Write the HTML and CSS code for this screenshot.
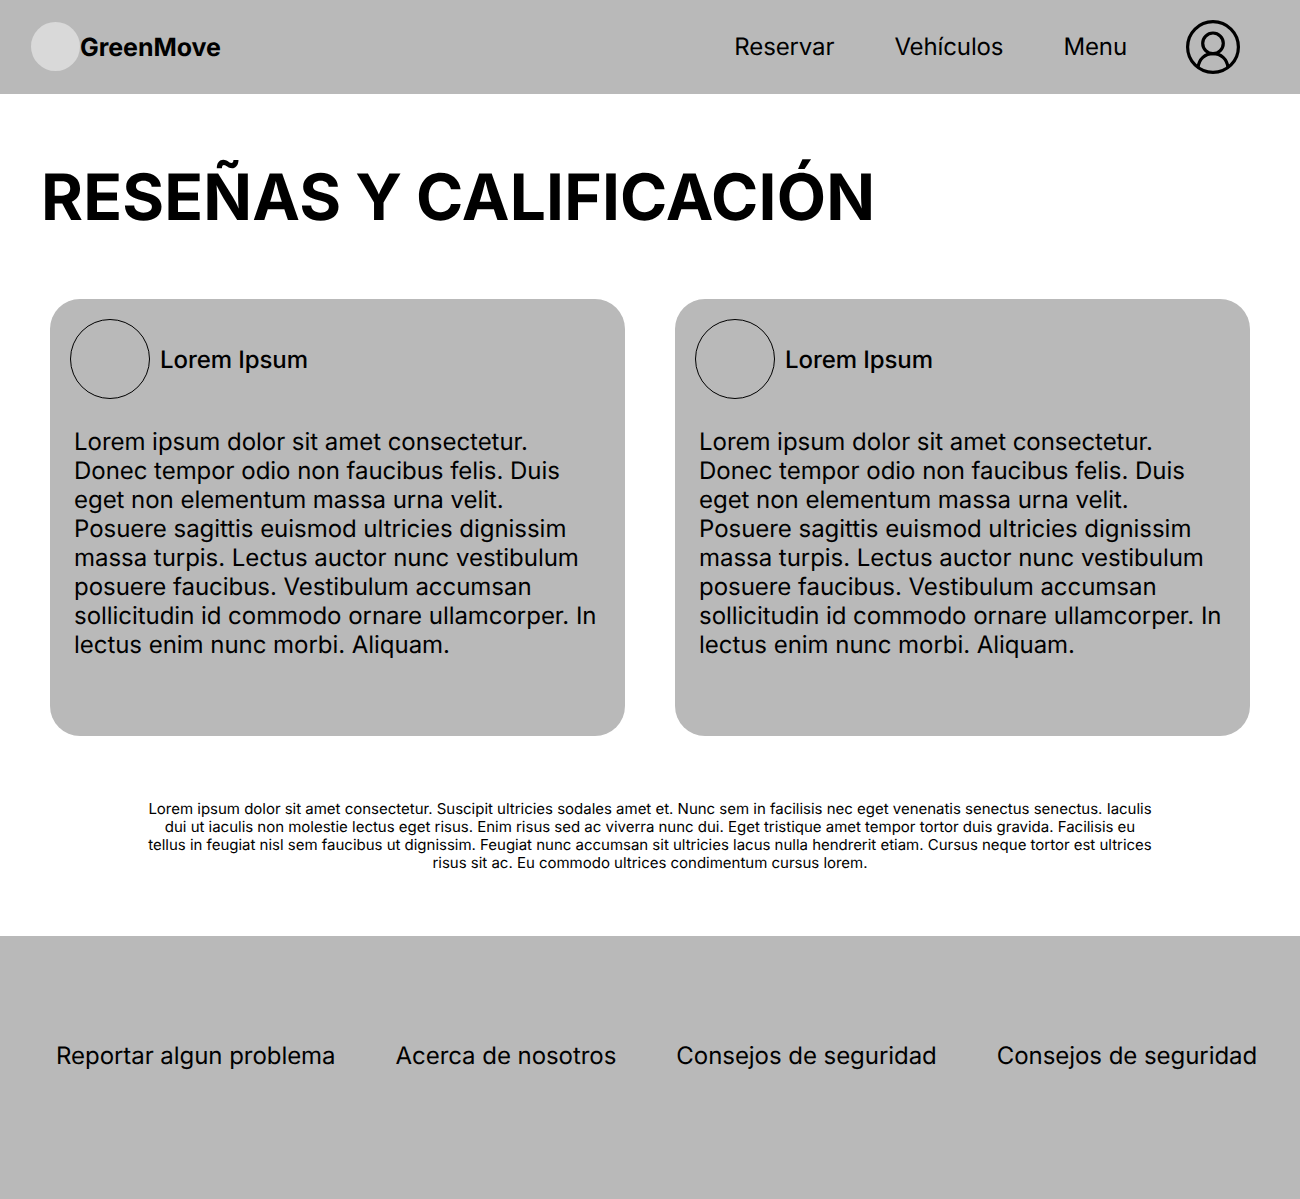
FILE: index.html
```html
<!DOCTYPE html>
<html lang="es">
<head>
<meta charset="utf-8">
<title>GreenMove</title>
<link rel="stylesheet" href="styles.css">
</head>
<body>
<header class="header">
  <div class="brand"><span class="logo"></span><span class="brand-name">GreenMove</span></div>
  <nav class="nav">
    <a class="nav-link">Reservar</a><a class="nav-link">Vehículos</a><a class="nav-link">Menu</a>
    <svg class="user" viewBox="0 0 54 54" fill="none" stroke="#000" stroke-width="3.2"><circle cx="27" cy="27" r="25.4"/><circle cx="27" cy="23.3" r="10.3"/><path d="M12 47.5C13 39 19 33.6 27 33.6S41 39 42 47.5"/></svg>
  </nav>
</header>
<main class="main">
  <h1 class="title">RESEÑAS Y CALIFICACIÓN</h1>
  <section class="cards">
    <article class="card">
      <div class="author"><span class="avatar"></span><h2 class="name">Lorem Ipsum</h2></div>
      <p class="review">Lorem ipsum dolor sit amet consectetur. Donec tempor odio non faucibus felis. Duis eget non elementum massa urna velit. Posuere sagittis euismod ultricies dignissim massa turpis. Lectus auctor nunc vestibulum posuere faucibus. Vestibulum accumsan sollicitudin id commodo ornare ullamcorper. In lectus enim nunc morbi. Aliquam.</p>
    </article>
    <article class="card">
      <div class="author"><span class="avatar"></span><h2 class="name">Lorem Ipsum</h2></div>
      <p class="review">Lorem ipsum dolor sit amet consectetur. Donec tempor odio non faucibus felis. Duis eget non elementum massa urna velit. Posuere sagittis euismod ultricies dignissim massa turpis. Lectus auctor nunc vestibulum posuere faucibus. Vestibulum accumsan sollicitudin id commodo ornare ullamcorper. In lectus enim nunc morbi. Aliquam.</p>
    </article>
  </section>
  <p class="note">Lorem ipsum dolor sit amet consectetur. Suscipit ultricies sodales amet et. Nunc sem in facilisis nec eget venenatis senectus senectus. Iaculis dui ut iaculis non molestie lectus eget risus. Enim risus sed ac viverra nunc dui. Eget tristique amet tempor tortor duis gravida. Facilisis eu tellus in feugiat nisl sem faucibus ut dignissim. Feugiat nunc accumsan sit ultricies lacus nulla hendrerit etiam. Cursus neque tortor est ultrices risus sit ac. Eu commodo ultrices condimentum cursus lorem.</p>
</main>
<footer class="footer">
  <a>Reportar algun problema</a><a>Acerca de nosotros</a><a>Consejos de seguridad</a><a>Consejos de seguridad</a>
</footer>
</body>
</html>
```

FILE: styles.css
```css
* { box-sizing: border-box; margin: 0; padding: 0; }
body {
  display: flex;
  flex-direction: column;
  height: 1199px;
  font: 400 24px/29px Inter, sans-serif;
  text-rendering: geometricPrecision;
  color: #000;
  background: #fff;
}
.header {
  display: flex;
  align-items: center;
  justify-content: space-between;
  height: 94px;
  padding: 0 60px 0 31px;
  background: #b9b9b9;
}
.brand { display: flex; align-items: center; padding-bottom: 1px; }
.logo { width: 49px; height: 49px; border-radius: 50%; background: #d9d9d9; }
.brand-name { padding-top: 3px; font-size: 25px; font-weight: 700; letter-spacing: -0.05px; }
.nav { display: flex; align-items: center; gap: 60px; }
.nav-link { padding-bottom: 1px; letter-spacing: -0.12px; }
.nav-link:nth-child(3) { margin-right: -1px; }
.user { width: 54px; height: 54px; }
.main { display: flex; flex-direction: column; height: 842px; }
.title { margin: 65px 0 0 41px; font-size: 64px; line-height: 77px; font-weight: 700; letter-spacing: 0.17px; word-spacing: -1.5px; white-space: nowrap; }
.cards { display: grid; grid-template-columns: 1fr 1fr; gap: 50px; margin: 63px 50px 0; }
.card { height: 437px; padding: 20px; border-radius: 30px; background: #b9b9b9; }
.author { display: flex; align-items: center; gap: 10px; }
.avatar { width: 80px; height: 80px; border: 1px solid #000; border-radius: 50%; }
.name { font-size: 24px; font-weight: 500; letter-spacing: -0.08px; }
.review { width: 527px; margin: 28px 0 0 4px; letter-spacing: -0.04px; }
.note { width: 1010px; margin: 64px auto 0; font-size: 15px; line-height: 18px; letter-spacing: -0.015px; text-align: center; }
.footer {
  display: flex;
  align-items: center;
  gap: 60px;
  height: 263px;
  padding: 0 0 24px 56px;
  letter-spacing: -0.05px;
  white-space: nowrap;
  background: #b9b9b9;
}
```
